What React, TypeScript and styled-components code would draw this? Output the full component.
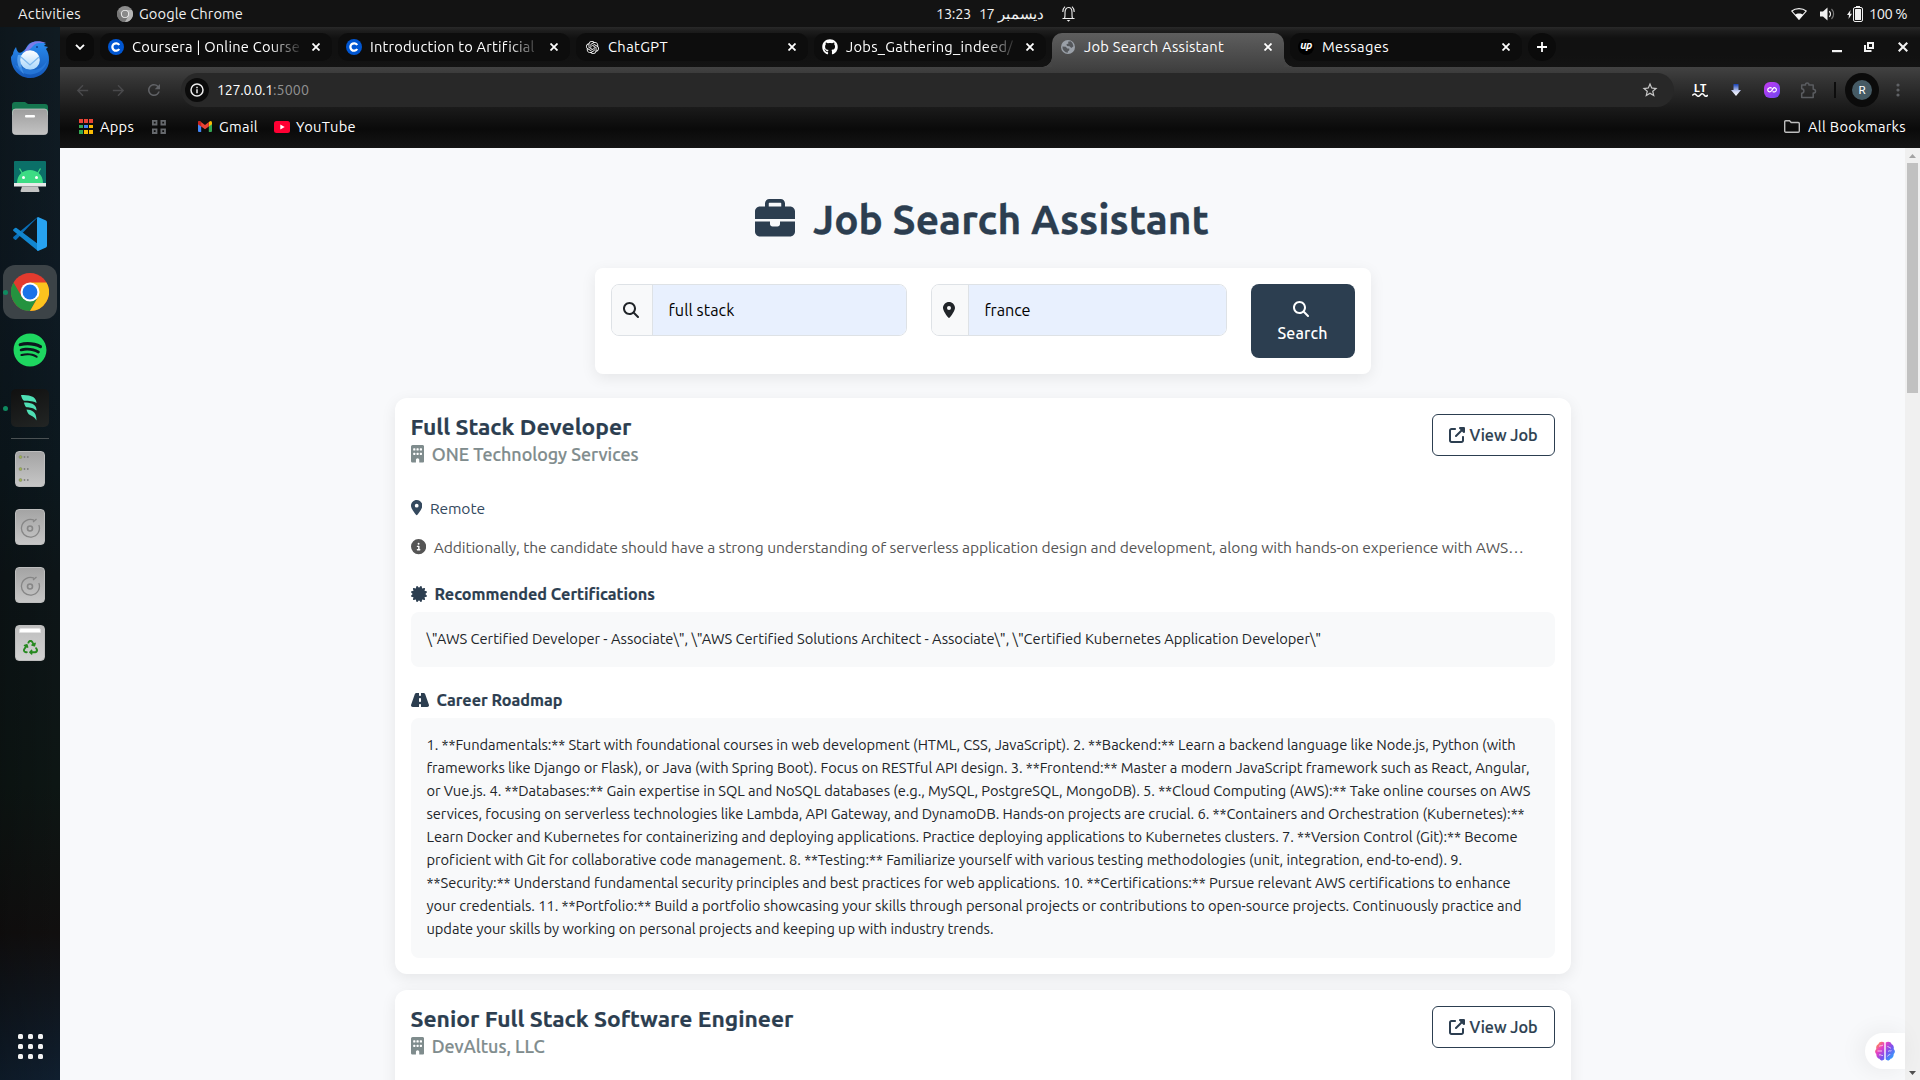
import React, { useLayoutEffect, useRef, useState } from "react";
import styled, { createGlobalStyle, css } from "styled-components";
import {
  FaBriefcase,
  FaMagnifyingGlass,
  FaLocationDot,
  FaBuilding,
  FaCircleInfo,
  FaCertificate,
  FaRoad,
  FaUpRightFromSquare,
  FaGithub,
  FaSpotify,
  FaRecycle,
} from "react-icons/fa6";
import { SiOpenai } from "react-icons/si";
import { MdStarBorder, MdRefresh, MdArrowBack, MdArrowForward } from "react-icons/md";

const GlobalStyle = createGlobalStyle`
  * { box-sizing: border-box; }
  html, body { margin: 0; padding: 0; overflow: hidden; background: #f8f9fb; }
  body { font-family: Ubuntu, "Noto Sans", "Open Sans", sans-serif; }
  svg { display: block; flex: none; }
`;

/* ---------- text set to a given measure ---------- */

const Measured = styled.span`
  display: inline-block;
  white-space: nowrap;
`;

function Fit({ w, children }: { w: number; children: string }) {
  const ref = useRef<HTMLSpanElement>(null);
  const [spacing, setSpacing] = useState(0);
  useLayoutEffect(() => {
    const el = ref.current;
    if (!el) return;
    el.style.letterSpacing = "0px";
    const natural = el.getBoundingClientRect().width;
    setSpacing((w - natural) / children.length);
  }, [w, children]);
  return (
    <Measured ref={ref} style={{ letterSpacing: `${spacing}px` }}>
      {children}
    </Measured>
  );
}

/* ---------- desktop ---------- */

const Desktop = styled.div`
  width: 1920px;
  height: 1080px;
  display: grid;
  grid-template-rows: 27px 1053px;
  grid-template-columns: 60px 1860px;
  overflow: hidden;
`;

const SystemBar = styled.header`
  grid-column: 1 / 3;
  background: #131313;
  color: #f0f0f0;
  font-size: 14.67px;
  line-height: 27px;
  display: grid;
  grid-template-columns: 936px 1fr auto;
  align-items: center;
`;

const SystemGroup = styled.div<{ $left?: number; $right?: number }>`
  display: flex;
  align-items: center;
  height: 27px;
  padding-left: ${(p) => p.$left ?? 0}px;
  padding-right: ${(p) => p.$right ?? 0}px;
`;

const Spacer = styled.i<{ $w?: number }>`
  flex: ${(p) => (p.$w ? `0 0 ${p.$w}px` : "1 1 0")};
`;

/* ---------- dock ---------- */

const DockBar = styled.nav`
  background: linear-gradient(90deg, rgba(0, 0, 0, 0.18), transparent),
    linear-gradient(180deg, #101b22 0%, #0e1a23 25%, #0c181e 42%, #0d1518 52%, #0d1614 72%, #110f0f 86%, #0f1b28 97%, #101f2f 100%);
  display: flex;
  flex-direction: column;
  align-items: center;
  padding-top: 6px;
`;

const DockSlot = styled.div<{ $active?: boolean }>`
  width: 54px;
  height: 54px;
  margin-bottom: 4px;
  border-radius: 12px;
  display: grid;
  place-items: center;
  position: relative;
  flex: none;
  background: ${(p) => (p.$active ? "#3c4347" : "transparent")};
`;

const RunningDot = styled.i`
  position: absolute;
  left: 0;
  top: 25px;
  width: 5px;
  height: 5px;
  border-radius: 50%;
  background: #0f8a60;
`;

const DockRule = styled.hr`
  width: 38px;
  height: 1px;
  margin: -1px 0 3px;
  border: 0;
  background: #4b5153;
`;

const WindsurfTile = styled.div`
  width: 38px;
  height: 38px;
  border-radius: 5px;
  background: linear-gradient(160deg, #101010, #222524);
  display: grid;
  place-items: center;
  padding-right: 2px;
`;

const DiskTile = styled.div`
  width: 30px;
  height: 36px;
  border-radius: 4px;
  border: 1px solid #bdbdbd;
  background: linear-gradient(#a4a4a4, #c6c6c6);
  display: grid;
  place-items: center;
`;

const TrashTile = styled(DiskTile)`
  background: linear-gradient(#bfbfbf, #d2d2d2);
  grid-template-rows: 9px 1fr;
`;

const TrashPaper = styled.i`
  width: 22px;
  height: 5px;
  border-radius: 2px 2px 0 0;
  background: #fff;
  border: 1px solid #e2e2e2;
`;

const AppGrid = styled.div`
  margin-top: auto;
  margin-bottom: 21px;
  display: grid;
  grid-template-columns: repeat(3, 5px);
  gap: 5px;
`;

const AppDot = styled.i`
  width: 5px;
  height: 5px;
  border-radius: 1.5px;
  background: #f2f2f2;
`;

/* ---------- browser chrome ---------- */

const Browser = styled.main`
  display: grid;
  grid-template-rows: 40px 81px 932px;
  min-width: 0;
`;

const TabStrip = styled.div`
  display: flex;
  align-items: flex-start;
  padding: 6px 0 0 6px;
  background: linear-gradient(#292929 0, #1d1d1d 4px, #111 11px, #111 28px, #131313 100%);
  color: #fff;
  font-size: 14.67px;
`;

const RoundButton = styled.div<{ $round?: boolean }>`
  width: 28px;
  height: 28px;
  border-radius: ${(p) => (p.$round ? 14 : 9)}px;
  background: #0b0b0b;
  display: grid;
  place-items: center;
  margin-right: 6px;
`;

const TabBox = styled.div<{ $active?: boolean }>`
  width: 232px;
  height: 28px;
  border-radius: 10px;
  background: #0d0d0d;
  display: flex;
  align-items: center;
  padding-left: 8px;
  margin-right: 6px;
  position: relative;
  ${(p) =>
    p.$active &&
    css`
      height: 34px;
      padding-bottom: 6px;
      border-radius: 10px 10px 0 0;
      background: linear-gradient(#5e5e5e, #424242);
      &::before,
      &::after {
        content: "";
        position: absolute;
        bottom: 0;
        width: 10px;
        height: 10px;
      }
      &::before {
        left: -10px;
        background: radial-gradient(circle at 0 0, transparent 9.5px, #454545 10px);
      }
      &::after {
        right: -10px;
        background: radial-gradient(circle at 100% 0, transparent 9.5px, #454545 10px);
      }
    `}
`;

const TabIcon = styled.div`
  width: 16px;
  height: 28px;
  display: grid;
  place-items: center;
`;

const TabTitle = styled.div<{ $fade?: boolean }>`
  width: 168px;
  margin-left: 8px;
  line-height: 28px;
  ${(p) => p.$fade && "mask-image: linear-gradient(90deg, #000 138px, transparent 172px);"}
`;

const CloseSlot = styled.div`
  width: 32px;
  display: grid;
  place-items: center;
`;

const UpworkBadge = styled.div`
  width: 16px;
  height: 16px;
  border-radius: 50%;
  background: #000;
  font: italic 700 11px/13px Ubuntu, "Open Sans", sans-serif;
  text-align: center;
  letter-spacing: -0.5px;
`;

const ChromeBars = styled.div`
  background: linear-gradient(#424242 0, #333 14px, #1b1b1b 40px, #0a0a0a 62px, #141414 100%);
  display: grid;
  grid-template-rows: 6px 34px 41px;
  color: #fff;
`;

const Toolbar = styled.div`
  grid-row: 2;
  display: flex;
  align-items: center;
  padding-left: 4px;
`;

const IconCell = styled.div<{ $w?: number; $c?: string }>`
  width: ${(p) => p.$w ?? 36}px;
  color: ${(p) => p.$c ?? "#54565a"};
  display: grid;
  place-items: center;
  flex: none;
`;

const AddressBar = styled.div`
  margin-left: 9px;
  width: 1493px;
  height: 34px;
  border-radius: 17px;
  background: #282828;
  display: flex;
  align-items: center;
  padding-left: 4px;
  font-size: 14.2px;
  line-height: 34px;
`;

const SiteInfo = styled.div`
  width: 24px;
  height: 24px;
  border-radius: 50%;
  background: #0b0b0b;
  display: grid;
  place-items: center;
  margin-right: 8px;
`;

const Port = styled.span`
  color: #929292;
`;

const LanguageTool = styled.div`
  width: 18px;
  display: grid;
  justify-items: center;
  font: 700 11px/9px "Open Sans", sans-serif;
  color: #fff;
  row-gap: 1px;
`;

const Avatar = styled.div`
  width: 34px;
  height: 34px;
  border-radius: 50%;
  border: 7px solid #0b0b0b;
  background: #455a64;
  font: 11.5px/20px Roboto, sans-serif;
  text-align: center;
  color: #fff;
`;

const BarRule = styled.i<{ $h: number; $c: string }>`
  width: 2px;
  height: ${(p) => p.$h}px;
  background: ${(p) => p.$c};
`;

const Bookmarks = styled.div`
  grid-row: 3;
  display: flex;
  align-items: center;
  height: 41px;
  padding: 0 14px 2px 19px;
  font-size: 14.67px;
`;

const AppsIcon = styled.div`
  display: grid;
  grid-template-columns: repeat(3, 3px);
  gap: 2px;
`;

const AppsCell = styled.i<{ $c: string }>`
  width: 3.5px;
  height: 3.5px;
  background: ${(p) => p.$c};
`;

/* ---------- page ---------- */

const Viewport = styled.div`
  display: grid;
  grid-template-columns: 1845px 15px;
  position: relative;
  overflow: hidden;
  background: #f8f9fb;
`;

const Page = styled.div`
  height: 932px;
  overflow: hidden;
  display: flex;
  flex-direction: column;
  align-items: center;
  color: #2c3e50;
`;

const Scrollbar = styled.div`
  background: #f0f0f0;
  display: flex;
  flex-direction: column;
  align-items: center;
  justify-content: space-between;
  padding: 6px 0 5px;
`;

const Thumb = styled.i`
  width: 11px;
  height: 230px;
  margin: 5px 0 auto;
  background: #c1c1c1;
`;

const Heading = styled.h1`
  margin: 47px 0 0;
  height: 48px;
  flex: none;
  padding-right: 1px;
  display: flex;
  align-items: center;
  gap: 18px;
  font-size: 40.6px;
  line-height: 48px;
  font-weight: 700;
  -webkit-text-stroke: 0.3px currentColor;
`;

const SearchCard = styled.form`
  margin: 25px 0 24px;
  width: 776px;
  height: 106px;
  padding: 16px;
  flex: none;
  display: flex;
  align-items: flex-start;
  gap: 24px;
  border-radius: 8px;
  background: #fff;
  box-shadow: 0 4px 15px rgba(0, 0, 0, 0.08);
`;

const Field = styled.div`
  width: 296px;
  height: 52px;
  display: flex;
  border: 1px solid #dee2e6;
  border-radius: 8px;
  overflow: hidden;
  color: #212529;
`;

const FieldIcon = styled.div<{ $w: number }>`
  width: ${(p) => p.$w}px;
  padding-right: 1px;
  display: grid;
  place-items: center;
  background: #f8f9fa;
  border-right: 1px solid #dee2e6;
`;

const FieldValue = styled.div`
  flex: 1;
  background: #e8f0fe;
  padding-left: 16px;
  font-size: 16.3px;
  line-height: 50px;
  color: #000;
`;

const SearchButton = styled.div`
  width: 104px;
  height: 74px;
  border-radius: 8px;
  background: #2c3e50;
  color: #fff;
  display: flex;
  flex-direction: column;
  align-items: center;
  padding-top: 17px;
  font-size: 16px;
  line-height: 24px;
  font-weight: 500;
  gap: 4px;
  svg { margin-right: 4px; }
`;

const JobCard = styled.article`
  width: 1176px;
  flex: none;
  padding: 16px;
  margin-bottom: 16px;
  border-radius: 12px;
  background: #fff;
  box-shadow: 0 4px 15px rgba(0, 0, 0, 0.08);
`;

const JobHead = styled.div`
  display: flex;
  justify-content: space-between;
  align-items: flex-start;
  height: 53px;
  margin-bottom: 29px;
`;

const JobTitle = styled.h2`
  margin: 0 0 2px;
  font-size: 22.8px;
  line-height: 26px;
  font-weight: 700;
  -webkit-text-stroke: 0.2px currentColor;
`;

const IconLine = styled.div<{ $size: number; $c: string; $gap: number; $after?: number; $bold?: number }>`
  display: flex;
  align-items: center;
  gap: ${(p) => p.$gap}px;
  height: 24px;
  font-size: ${(p) => p.$size}px;
  font-weight: ${(p) => p.$bold ?? 400};
  line-height: 24px;
  color: ${(p) => p.$c};
  margin-bottom: ${(p) => p.$after ?? 0}px;
  -webkit-text-stroke: ${(p) => (p.$bold ? "0.2px currentColor" : "0")};
`;

const ViewButton = styled.a`
  width: 123px;
  height: 42px;
  border: 1px solid #2c3e50;
  border-radius: 6px;
  display: flex;
  align-items: center;
  padding-left: 16px;
  gap: 5px;
  font-size: 16.2px;
  line-height: 40px;
  font-weight: 500;
  -webkit-text-stroke: 0.2px currentColor;
`;

const Panel = styled.div<{ $after?: number; $foot?: number }>`
  padding: 15px 16px ${(p) => p.$foot ?? 17}px;
  border-radius: 8px;
  background: #f8f9fa;
  color: #212529;
  font-size: 14.7px;
  line-height: 23px;
  margin-bottom: ${(p) => p.$after ?? 0}px;
`;

const PanelLine = styled.div`
  height: 23px;
`;

const BrainPill = styled.div`
  position: absolute;
  left: 1805px;
  top: 885px;
  width: 40px;
  height: 36px;
  padding: 8px 0 0 10px;
  border-radius: 18px 0 0 18px;
  background: #fff;
  box-shadow: -4px 0 24px rgba(0, 0, 0, 0.07);
`;

/* ---------- drawings ---------- */

const Cross = ({ size = 8, stroke = 1.8 }: { size?: number; stroke?: number }) => (
  <svg width={size} height={size} viewBox="0 0 8 8" stroke="#fff" strokeWidth={stroke}>
    <path d="M.5.5l7 7M7.5.5l-7 7" />
  </svg>
);

const CourseraIcon = () => (
  <svg width="16" height="16" viewBox="0 0 16 16">
    <circle cx="8" cy="8" r="8" fill="#0056d2" />
    <path d="M11.2 6A3.7 3.7 0 1 0 11.2 10" fill="none" stroke="#fff" strokeWidth="2.3" />
  </svg>
);

const GlobeIcon = () => (
  <svg width="14" height="14" viewBox="0 0 14 14">
    <circle cx="7" cy="7" r="7" fill="#9aa0a8" />
    <path d="M1.4 6.5l3.4.3 1.5 1.6 2 .1v1.8l-1.5 1.3v1.2A6 6 0 0 1 1.4 6.5zM7 1.8l2.6-.5a6 6 0 0 1 2.9 5L10.3 8 8.5 6.2 6 5.9 5.4 4.3 7.5 3.6z" fill="#55585c" />
  </svg>
);

const ChromeLogo = ({ size, grey }: { size: number; grey?: boolean }) => {
  const c = grey ? ["#8d8d8d", "#777", "#b5b5b5", "#8a8a8a"] : ["#e33b2e", "#24933f", "#fcc31e", "#1a73e8"];
  return (
    <svg width={size} height={size} viewBox="0 0 48 48">
      <circle cx="24" cy="24" r="24" fill={c[0]} />
      <path d="M3.2 12A24 24 0 0 0 24 48l10.4-18L24 24 13.6 30z" fill={c[1]} />
      <path d="M24 48A24 24 0 0 0 44.8 12H24l10.4 18z" fill={c[2]} />
      <circle cx="24" cy="24" r="12" fill={grey ? "#eee" : "#fff"} />
      <circle cx="24" cy="24" r="9.4" fill={c[3]} />
    </svg>
  );
};

const Thunderbird = () => (
  <svg width="38" height="38" viewBox="0 0 38 38">
    <defs>
      <linearGradient id="tb" x1="0" y1="0" x2="0" y2="1">
        <stop offset="0" stopColor="#2a8df0" />
        <stop offset="1" stopColor="#1457b8" />
      </linearGradient>
      <linearGradient id="env" x1="0" y1="0" x2="0" y2="1">
        <stop offset="0" stopColor="#fff" />
        <stop offset="1" stopColor="#a9d6fb" />
      </linearGradient>
    </defs>
    <path d="M5 6C3 9 2 11 2 13L0 16c0 12 8 21 19 21s19-8 19-18c0-5-1-8-3-11l2-2-4-1 2-2C28-1 20 0 17 4c-2 3-3 5-6 7C8 13 6 11 5 6z" fill="url(#tb)" />
    <path d="M17 5c3-5 11-6 18-3-5 0-10-1-13 3-2 3-6 5-9 8 0-3 2-5 4-8z" fill="#7b7be8" />
    <path d="M7 14c-2 6 0 14 6 19-3-7-4-13-1-19z" fill="#6fb4f5" opacity=".7" />
    <circle cx="19" cy="19" r="9.8" fill="url(#env)" />
    <path d="M10 16l9 8 9-8" fill="none" stroke="#7fb9ee" strokeWidth="1.3" />
    <circle cx="26" cy="6" r="1" fill="#0d3c8a" />
    <path d="M4 24c5 9 15 12 24 7 5-3 7-7 8-11-3 5-8 9-14 9-7 0-12-3-18-5z" fill="#2f83e4" opacity=".6" />
  </svg>
);

const Files = () => (
  <svg width="36" height="33" viewBox="0 0 36 33">
    <defs>
      <linearGradient id="fd" x1="0" y1="0" x2="0" y2="1">
        <stop offset="0" stopColor="#9d9d9d" />
        <stop offset="1" stopColor="#c3c3c3" />
      </linearGradient>
    </defs>
    <path d="M0 3q0-3 3-3h10l3 2h17q3 0 3 3v8H0z" fill="#15764f" />
    <rect x=".5" y="7" width="35" height="25.5" rx="3" fill="url(#fd)" stroke="#cfcfcf" strokeWidth=".7" />
    <rect x="13" y="13" width="10" height="2.6" rx="1" fill="#fff" />
  </svg>
);

const AndroidStudio = () => (
  <svg width="32" height="31" viewBox="0 0 32 31">
    <rect width="32" height="23" rx="1" fill="#0b7068" />
    <path d="M3 22c0-8 6-13 13-13s13 5 13 13z" fill="#3ddc84" />
    <path d="M8.5 12.5L5.5 7.5M23.5 12.5l3-5" stroke="#3ddc84" strokeWidth="1.3" />
    <circle cx="9.5" cy="16.5" r="1.5" fill="#fff" />
    <circle cx="22.5" cy="16.5" r="1.5" fill="#fff" />
    <rect y="22" width="32" height="3.5" fill="#e8e8e8" />
    <path d="M8 25.5h16l1.5 4.5q0 1-1 1h-17q-1 0-1-1z" fill="#c4c4c4" />
  </svg>
);

const VSCode = () => (
  <svg width="34" height="34" viewBox="0 0 34 34">
    <path d="M25 0l-7 7L3.500 22.500q-.8.800-1.600.200L.5 21.500q-.8-.8 0-1.700L24 .6z" fill="#0a6fb8" />
    <path d="M25 34L.5 14q-.8-.8 0-1.700L2 11q.8-.6 1.600 0L25 27z" fill="#1286cf" />
    <path d="M25 0l8 3.600q1 .5 1 1.600v23.600q0 1.100-1 1.600L25 34q-1-.4-1-1.500V1.500Q24 .4 25 0z" fill="#27a2f0" />
  </svg>
);

const Windsurf = () => (
  <svg width="17" height="26" viewBox="0 0 17 26" fill="#4fe0b5">
    <path d="M0 0c7 0 15 .5 15.500 7.500L15.500 8C11 5 5 6.500 2.500 5.500 1 4 .5 2 0 0z" />
    <path d="M3 7.500c6 0 12 1 12.500 7v1C11.500 12 7 13 5 12 3.800 10.500 3.300 9 3 7.500z" />
    <path d="M5.500 14.500c5 .5 10 1.500 10 11C13 21 9.500 20.500 8 19.500 6.500 18 6 16 5.500 14.500z" />
  </svg>
);

const Disc = () => (
  <svg width="22" height="22" viewBox="0 0 22 22" fill="none" stroke="#868686" strokeWidth="1.3">
    <path d="M15 4.200A9 8.800 0 1 0 19.800 9M14 6l3.500-3" />
    <circle cx="11" cy="12.5" r="2.5" strokeWidth="1.6" />
  </svg>
);

const Server = () => (
  <svg width="24" height="30" viewBox="0 0 24 30">
    {[3, 15, 26].map((y) => (
      <g key={y}>
        <circle cx="2.5" cy={y} r="1.5" fill="#9db34d" stroke="#7b7f6a" strokeWidth=".5" />
        <circle cx="6.5" cy={y} r=".9" fill="#7c7c7c" />
        <circle cx="9.8" cy={y} r=".9" fill="#7c7c7c" />
      </g>
    ))}
  </svg>
);

const Bell = () => (
  <svg width="13" height="16" viewBox="0 0 13 16" fill="none" stroke="#eee" strokeWidth="1.1">
    <path d="M.5 12.500h12M2.500 12.500C3.200 11 3 9 3 6.500 3 3.500 4.300 1.500 6.500 1.500s3.500 2 3.500 5c0 2.500-.2 4.500.5 6M.8 6C.8 3.500 1.500 2 3 .7M12.200 6c0-2.500-.7-4-2.200-5.300" />
    <path d="M4.700 14h3.600L6.500 15.800z" fill="#eee" stroke="none" />
  </svg>
);

const Wifi = () => (
  <svg width="16" height="12" viewBox="0 0 16 12">
    <path d="M.8 3C4.500-.2 11.500-.2 15.200 3L8 11.300z" fill="none" stroke="#f0f0f0" strokeWidth="1.1" />
    <path d="M4 6.700C6 5 10 5 12 6.700L8 11.500z" fill="#f5f5f5" />
  </svg>
);

const Sound = () => (
  <svg width="15" height="14" viewBox="0 0 15 14">
    <path d="M0 4.500h3L7.500.5v13L3 9.500H0z" fill="#f0f0f0" />
    <path d="M9.300 4.200a4 4 0 0 1 0 5.600" fill="none" stroke="#f0f0f0" strokeWidth="1.3" />
    <path d="M11.500 2a7 7 0 0 1 0 10" fill="none" stroke="#777" strokeWidth="1.2" />
  </svg>
);

const Battery = () => (
  <svg width="16" height="16" viewBox="0 0 16 16" fill="#f0f0f0">
    <path d="M3.500 4L0 9h2L1.500 13 5 7.800H3z" />
    <rect x="9" width="4" height="2" />
    <rect x="6.5" y="1.5" width="9" height="14" rx="1.5" fill="none" stroke="#f0f0f0" />
    <rect x="8" y="3" width="6" height="11" rx=".5" />
  </svg>
);

const Gmail = () => (
  <svg width="14" height="11" viewBox="0 0 14 11">
    <path d="M0 1.500V10q0 1 1 1h2.200V4z" fill="#4285f4" />
    <path d="M14 1.500V10q0 1-1 1h-2.200V4z" fill="#34a853" />
    <path d="M10.800 1L12 .2q2-.7 2 1.500v1.500L10.800 5.500z" fill="#fbbc04" />
    <path d="M0 1.700Q0-.5 2 .2L7 4l3.800-3v4.500L7 8.300 0 3.200z" fill="#ea4335" />
    <path d="M0 1.700Q0-.5 2 .2L3.200 1v4.500L0 3.200z" fill="#c5221f" />
  </svg>
);

const YouTube = () => (
  <svg width="16" height="12" viewBox="0 0 16 12">
    <rect width="16" height="12" rx="2.5" fill="#f03" />
    <path d="M6.300 3.400v5.200L10.700 6z" fill="#fff" />
  </svg>
);

const FolderIcon = () => (
  <svg width="16" height="13" viewBox="0 0 16 13" fill="none" stroke="#bdbdbd" strokeWidth="1.4">
    <path d="M.7 11V1.700q0-1 1-1h3.800l1.700 1.800h7q1.100 0 1.100 1V11q0 1.200-1.100 1.200H1.800Q.7 12.200.7 11z" />
  </svg>
);

const PuzzleIcon = () => (
  <svg width="17" height="17" viewBox="0 0 17 17" fill="none" stroke="#5a5c60" strokeWidth="1.5">
    <path d="M1.700 3h3.800q-.2-2 1.700-2t1.700 2h4.300v4.300q2.300 0 2.300 1.900t-2.300 1.900v4.400H1.700v-4.200q2.200-.3 2.200-2.300T1.700 6.800z" strokeLinejoin="round" />
  </svg>
);

const GroupsIcon = () => (
  <svg width="14" height="14" viewBox="0 0 14 14" fill="none" stroke="#66696d" strokeWidth="1.8">
    <path d="M.9.9h3.600v3.600H.9zM9.400.9H13v3.600H9.400zM.9 9.400h3.600V13H.9zM9.400 9.400H13V13H9.400z" />
  </svg>
);

const Brain = () => (
  <svg width="20" height="20" viewBox="0 0 20 20">
    <defs>
      <linearGradient id="br" gradientUnits="userSpaceOnUse" x1="1" y1="2" x2="19" y2="18">
        <stop offset="0" stopColor="#ff9a3c" />
        <stop offset=".3" stopColor="#e93fc4" />
        <stop offset=".6" stopColor="#7a52ee" />
        <stop offset="1" stopColor="#22b0ff" />
      </linearGradient>
    </defs>
    <path d="M9.300 1.500C7 0 4 .8 3.500 3 1.500 4 .8 6 1.300 8-.4 9.500-.2 12 1.300 13c-.2 3 1.700 4.500 3.200 4.700C5.500 20 8.500 20 9.300 18z" fill="url(#br)" />
    <path d="M10.700 1.500C13 0 16 .8 16.500 3c2 1 2.700 3 2.200 5 1.700 1.500 1.500 4 0 5 .2 3-1.700 4.500-3.200 4.700-1 2.300-4 2.300-4.800.3z" fill="url(#br)" />
    <path d="M4 5.500c1-1.500 2.500 0 4-1.500M2.500 10H7M4 14c1.500-1 2.500 1 4 .5M12.500 5c1 2 2.500 1 3.500 2.500M13 10.500c1.500-1.500 2.500 0 3.500-.8M12.500 15.500c.5-2 2-1 2.800-2.500" fill="none" stroke="#fff" strokeWidth=".9" opacity=".75" />
  </svg>
);

/* ---------- data ---------- */

const tabs = [
  { title: "Coursera | Online Course", w: 168, icon: <CourseraIcon />, fade: true },
  { title: "Introduction to Artificial", w: 164, icon: <CourseraIcon />, fade: true },
  { title: "ChatGPT", w: 60, icon: <SiOpenai size={13} /> },
  { title: "Jobs_Gathering_indeed/", w: 167, icon: <FaGithub size={16} />, fade: true },
  { title: "Job Search Assistant", w: 140, icon: <GlobeIcon />, active: true },
  { title: "Messages", w: 67, icon: <UpworkBadge>up</UpworkBadge> },
];

const roadmap: [string, number][] = [
  ["1. **Fundamentals:** Start with foundational courses in web development (HTML, CSS, JavaScript). 2. **Backend:** Learn a backend language like Node.js, Python (with", 1089],
  ["frameworks like Django or Flask), or Java (with Spring Boot). Focus on RESTful API design. 3. **Frontend:** Master a modern JavaScript framework such as React, Angular,", 1103],
  ["or Vue.js. 4. **Databases:** Gain expertise in SQL and NoSQL databases (e.g., MySQL, PostgreSQL, MongoDB). 5. **Cloud Computing (AWS):** Take online courses on AWS", 1104],
  ["services, focusing on serverless technologies like Lambda, API Gateway, and DynamoDB. Hands-on projects are crucial. 6. **Containers and Orchestration (Kubernetes):**", 1098],
  ["Learn Docker and Kubernetes for containerizing and deploying applications. Practice deploying applications to Kubernetes clusters. 7. **Version Control (Git):** Become", 1091],
  ["proficient with Git for collaborative code management. 8. **Testing:** Familiarize yourself with various testing methodologies (unit, integration, end-to-end). 9.", 1035],
  ["**Security:** Understand fundamental security principles and best practices for web applications. 10. **Certifications:** Pursue relevant AWS certifications to enhance", 1083],
  ["your credentials. 11. **Portfolio:** Build a portfolio showcasing your skills through personal projects or contributions to open-source projects. Continuously practice and", 1095],
  ["update your skills by working on personal projects and keeping up with industry trends.", 567],
];

const appColors = ["#ea4335", "#ea4335", "#ea4335", "#34a853", "#4285f4", "#fbbc04", "#34a853", "#fbbc04", "#fbbc04"];

/* ---------- sections ---------- */

function JobHeader({ title, tw, company, cw }: { title: string; tw: number; company: string; cw: number }) {
  return (
    <JobHead>
      <div>
        <JobTitle>
          <Fit w={tw}>{title}</Fit>
        </JobTitle>
        <IconLine $size={17.9} $c="#7f8c8d" $gap={8} $bold={500}>
          <FaBuilding size={17.6} style={{ width: 13.2 }} />
          <Fit w={cw}>{company}</Fit>
        </IconLine>
      </div>
      <ViewButton>
        <FaUpRightFromSquare size={16} />
        <Fit w={68}>View Job</Fit>
      </ViewButton>
    </JobHead>
  );
}

export default function App() {
  return (
    <Desktop>
      <GlobalStyle />
      <SystemBar>
        <SystemGroup $left={18}>
          <Fit w={63}>Activities</Fit>
          <Spacer $w={36} />
          <ChromeLogo size={16} grey />
          <Spacer $w={6} />
          <Fit w={104}>Google Chrome</Fit>
        </SystemGroup>
        <SystemGroup>
          <Fit w={35}>13:23</Fit>
          <Spacer $w={8} />
          <Fit w={15}>17</Fit>
          <Spacer $w={4} />
          <span>ديسمبر</span>
          <Spacer $w={18} />
          <Bell />
        </SystemGroup>
        <SystemGroup $right={13}>
          <Wifi />
          <Spacer $w={13} />
          <Sound />
          <Spacer $w={12} />
          <Battery />
          <Spacer $w={6} />
          <Fit w={38}>100 %</Fit>
        </SystemGroup>
      </SystemBar>

      <DockBar>
        <DockSlot><Thunderbird /></DockSlot>
        <DockSlot><Files /></DockSlot>
        <DockSlot><AndroidStudio /></DockSlot>
        <DockSlot><VSCode /></DockSlot>
        <DockSlot $active><RunningDot /><ChromeLogo size={38} /></DockSlot>
        <DockSlot><FaSpotify size={34} color="#1ed760" /></DockSlot>
        <DockSlot><RunningDot /><WindsurfTile><Windsurf /></WindsurfTile></DockSlot>
        <DockRule />
        <DockSlot><DiskTile><Server /></DiskTile></DockSlot>
        <DockSlot><DiskTile><Disc /></DiskTile></DockSlot>
        <DockSlot><DiskTile><Disc /></DiskTile></DockSlot>
        <DockSlot><TrashTile><TrashPaper /><FaRecycle size={15} color="#26891f" /></TrashTile></DockSlot>
        <AppGrid>
          {appColors.map((_, i) => <AppDot key={i} />)}
        </AppGrid>
      </DockBar>

      <Browser>
        <TabStrip>
          <RoundButton>
            <svg width="10" height="6" viewBox="0 0 10 6" fill="none" stroke="#fff" strokeWidth="1.9"><path d="M1 .8l4 4 4-4" /></svg>
          </RoundButton>
          {tabs.map((t) => (
            <TabBox key={t.title} $active={t.active}>
              <TabIcon>{t.icon}</TabIcon>
              <TabTitle $fade={t.fade}><Fit w={t.w}>{t.title}</Fit></TabTitle>
              <CloseSlot><Cross /></CloseSlot>
            </TabBox>
          ))}
          <RoundButton $round>
            <svg width="10" height="10" viewBox="0 0 10 10" stroke="#fff" strokeWidth="1.8"><path d="M5 0v10M0 5h10" /></svg>
          </RoundButton>
          <Spacer />
          <IconCell $w={32}>
            <svg width="10" height="28" viewBox="0 0 10 28"><path d="M0 17h10v2.200H0z" fill="#f2f2f2" /></svg>
          </IconCell>
          <IconCell $w={32}>
            <svg width="10" height="28" viewBox="0 0 10 28" fill="none" stroke="#f2f2f2" strokeWidth="2"><path d="M4 10h5v5H4zM1 12v6h6.500" /></svg>
          </IconCell>
          <IconCell $w={35}>
            <svg width="10" height="28" viewBox="0 0 10 28" stroke="#f2f2f2" strokeWidth="2.2"><path d="M.7 9.700l8.600 8.600M9.300 9.700L.7 18.300" /></svg>
          </IconCell>
        </TabStrip>

        <ChromeBars>
          <Toolbar>
            <IconCell $c="#4a4a4c"><MdArrowBack size={17} /></IconCell>
            <IconCell $c="#4a4a4c"><MdArrowForward size={17} /></IconCell>
            <IconCell $c="#606266"><MdRefresh size={18} /></IconCell>
            <AddressBar>
              <SiteInfo>
                <svg width="14" height="14" viewBox="0 0 14 14" fill="none" stroke="#eee" strokeWidth="1.5"><circle cx="7" cy="7" r="6" /><path d="M7 6.200V10.300M7 3.700V5.200" /></svg>
              </SiteInfo>
              <Fit w={56}>127.0.0.1</Fit>
              <Port><Fit w={36}>:5000</Fit></Port>
              <Spacer />
              <IconCell $w={48} $c="#c8c8c8"><MdStarBorder size={18} /></IconCell>
            </AddressBar>
            <Spacer $w={8} />
            <IconCell>
              <LanguageTool>
                LT
                <svg width="16" height="4" viewBox="0 0 16 4" fill="none" stroke="#fff" strokeWidth="1.5"><path d="M.3 2.600C2 .5 3 .5 4.500 2.200S7 3.500 8.300 2 11 .4 12.300 2.200 15 3 15.800 2" /></svg>
              </LanguageTool>
            </IconCell>
            <IconCell>
              <svg width="10" height="12" viewBox="0 0 10 12">
                <defs><linearGradient id="dl" x1="0" y1="0" x2="0" y2="1"><stop offset="0" stopColor="#1540b5" /><stop offset=".6" stopColor="#cfd6f5" /><stop offset="1" stopColor="#fff" /></linearGradient></defs>
                <path d="M2.500 0h5v6H10l-5 6-5-6h2.500z" fill="url(#dl)" />
              </svg>
            </IconCell>
            <IconCell>
              <svg width="16" height="16" viewBox="0 0 16 16">
                <defs><linearGradient id="pu" x1="0" y1="0" x2="1" y2="1"><stop offset="0" stopColor="#c63af0" /><stop offset="1" stopColor="#6d45f2" /></linearGradient></defs>
                <rect width="16" height="16" rx="6" fill="url(#pu)" />
                <path d="M7.800 6.300C6 5 3.500 6 3.700 8.200c.3 2.200 3 2 4 .3L9 6.200M8.600 9.500c1.500 1 3.800.3 3.800-1.700S10 5 9 6.600L7.800 8.800" fill="none" stroke="#fff" strokeWidth="1.2" />
              </svg>
            </IconCell>
            <IconCell><PuzzleIcon /></IconCell>
            <Spacer $w={8} />
            <BarRule $h={16} $c="#0c0c0c" />
            <Spacer $w={9} />
            <Avatar>R</Avatar>
            <IconCell $w={38}>
              <svg width="4" height="14" viewBox="0 0 4 14" fill="#606266"><circle cx="2" cy="2" r="1.6" /><circle cx="2" cy="7" r="1.6" /><circle cx="2" cy="12" r="1.6" /></svg>
            </IconCell>
          </Toolbar>
          <Bookmarks>
            <AppsIcon>{appColors.map((c, i) => <AppsCell key={i} $c={c} />)}</AppsIcon>
            <Spacer $w={8} />
            <Fit w={34}>Apps</Fit>
            <Spacer $w={18} />
            <GroupsIcon />
            <Spacer $w={32} />
            <Gmail />
            <Spacer $w={7} />
            <Fit w={39}>Gmail</Fit>
            <Spacer $w={16} />
            <YouTube />
            <Spacer $w={6} />
            <Fit w={60}>YouTube</Fit>
            <Spacer />
            <FolderIcon />
            <Spacer $w={8} />
            <Fit w={98}>All Bookmarks</Fit>
          </Bookmarks>
        </ChromeBars>

        <Viewport>
          <Page>
            <Heading>
              <FaBriefcase size={40} />
              <Fit w={396}>Job Search Assistant</Fit>
            </Heading>

            <SearchCard>
              <Field>
                <FieldIcon $w={41}><FaMagnifyingGlass size={16} /></FieldIcon>
                <FieldValue><Fit w={66}>full stack</Fit></FieldValue>
              </Field>
              <Field>
                <FieldIcon $w={37}><FaLocationDot size={16} /></FieldIcon>
                <FieldValue><Fit w={46}>france</Fit></FieldValue>
              </Field>
              <SearchButton>
                <FaMagnifyingGlass size={16} />
                <Fit w={50}>Search</Fit>
              </SearchButton>
            </SearchCard>

            <JobCard>
              <JobHeader title="Full Stack Developer" tw={221} company="ONE Technology Services" cw={207} />
              <IconLine $size={15.6} $c="#34495e" $gap={8} $after={15}>
                <FaLocationDot size={15.2} style={{ width: 11.4 }} />
                <Fit w={55}>Remote</Fit>
              </IconLine>
              <IconLine $size={15.6} $c="#555" $gap={8} $after={23}>
                <FaCircleInfo size={15.2} />
                <Fit w={1090}>
                  Additionally, the candidate should have a strong understanding of serverless application design and development, along with hands-on experience with AWS…
                </Fit>
              </IconLine>
              <IconLine $size={16.2} $c="#2c3e50" $gap={8} $after={6} $bold={700}>
                <FaCertificate size={16} />
                <Fit w={220}>Recommended Certifications</Fit>
              </IconLine>
              <Panel $after={21}>
                <PanelLine>
                  <Fit w={893}>
                    {'\\"AWS Certified Developer - Associate\\", \\"AWS Certified Solutions Architect - Associate\\", \\"Certified Kubernetes Application Developer\\"'}
                  </Fit>
                </PanelLine>
              </Panel>
              <IconLine $size={16.2} $c="#2c3e50" $gap={8} $after={6} $bold={700}>
                <FaRoad size={18} />
                <Fit w={126}>Career Roadmap</Fit>
              </IconLine>
              <Panel $foot={18}>
                {roadmap.map(([line, w]) => (
                  <PanelLine key={line}>
                    <Fit w={w}>{line}</Fit>
                  </PanelLine>
                ))}
              </Panel>
            </JobCard>

            <JobCard>
              <JobHeader title="Senior Full Stack Software Engineer" tw={383} company="DevAltus, LLC" cw={113} />
            </JobCard>
          </Page>

          <Scrollbar>
            <svg width="7" height="4" viewBox="0 0 7 4" fill="#a3a3a3"><path d="M0 4L3.500 0 7 4z" /></svg>
            <Thumb />
            <svg width="7" height="4" viewBox="0 0 7 4" fill="#505050"><path d="M0 0h7L3.500 4z" /></svg>
          </Scrollbar>
          <BrainPill><Brain /></BrainPill>
        </Viewport>
      </Browser>
    </Desktop>
  );
}
